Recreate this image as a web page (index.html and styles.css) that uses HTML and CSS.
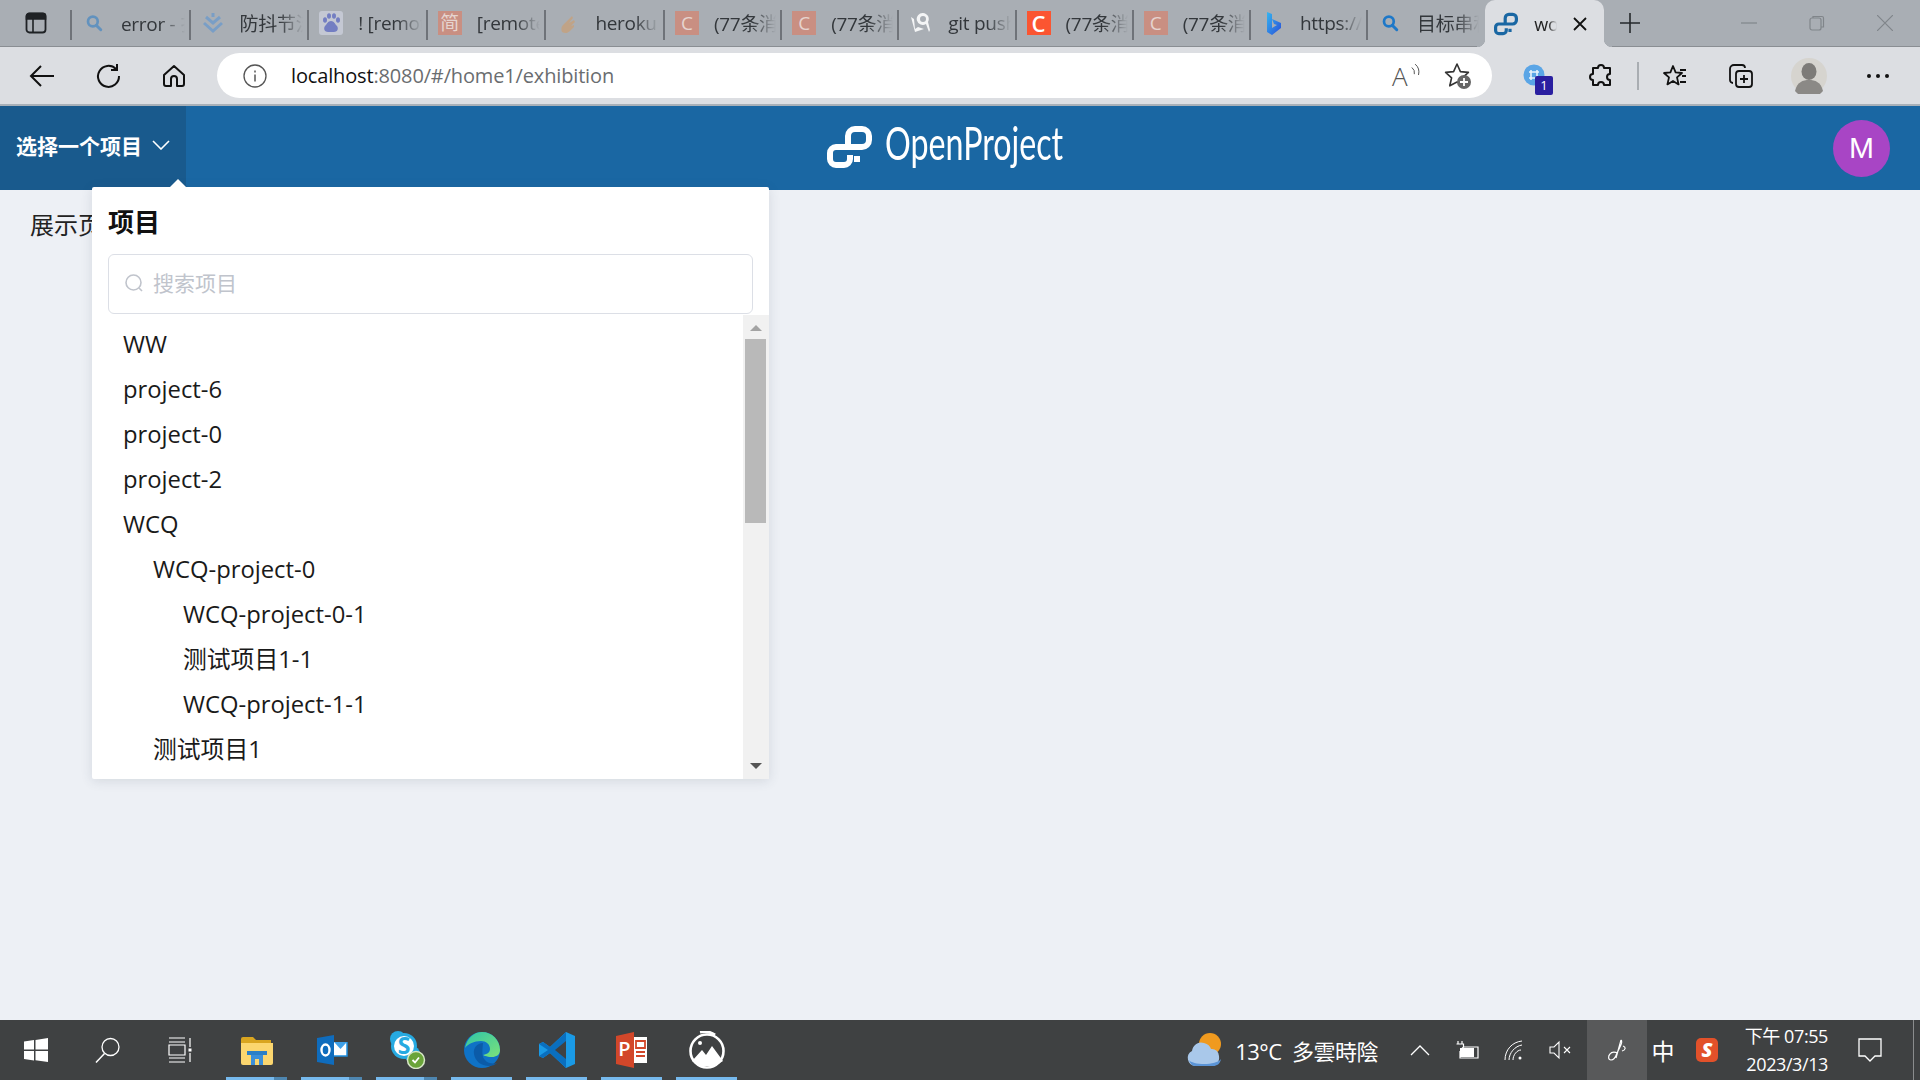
FILE: index.html
```html
<!DOCTYPE html>
<html lang="zh">
<head>
<meta charset="utf-8">
<title>OpenProject</title>
<link rel="stylesheet" href="styles.css">
</head>
<body>
<svg class="defs" width="0" height="0">
  <symbol id="op" viewBox="0 0 45 42">
    <path d="M21 19V10a7 7 0 0 1 7-7h7a7 7 0 0 1 7 7v4a7 7 0 0 1-7 7H9a6 6 0 0 0-6 6v6a6 6 0 0 0 6 6h8a6 6 0 0 0 6-6v-4" fill="none" stroke="currentColor" stroke-width="6"/>
    <rect x="27" y="30" width="6" height="6" fill="currentColor"/>
  </symbol>
  <symbol id="mag" viewBox="0 0 24 24">
    <circle cx="10.5" cy="10" r="6.500" fill="none" stroke="currentColor" stroke-width="3.600"/>
    <path d="M15 15l6 6" stroke="currentColor" stroke-width="4" stroke-linecap="round"/>
  </symbol>
</svg>

<div class="tabbar">
  <div class="tab-side">
    <svg class="i24" viewBox="0 0 24 24"><rect x="2.5" y="2.5" width="19" height="19" rx="3" fill="none" stroke="#1f2225" stroke-width="1.8"/><path d="M2.5 8h19V5a2.5 2.5 0 0 0-2.5-2.5H5A2.5 2.5 0 0 0 2.5 5zM9 8v13.5" fill="#1f2225" stroke="#1f2225" stroke-width="1.6"/></svg>
  </div>
  <div class="tab">
    <svg class="fav-small dim"><use href="#mag"/></svg>
    <span class="tab-title">error - 扌</span>
  </div>
  <div class="tab">
    <svg class="fav dim" viewBox="0 0 24 24"><path d="M12 2v4M5 6l7 6 7-6M3 12l9 8 9-8" fill="none" stroke="#4a90d9" stroke-width="3"/></svg>
    <span class="tab-title">防抖节流</span>
  </div>
  <div class="tab">
    <svg class="fav dim" viewBox="0 0 24 24"><rect width="24" height="24" rx="3" fill="#dfe3f2"/><g fill="#3f4fd0"><ellipse cx="6" cy="9" rx="2" ry="2.8"/><ellipse cx="10" cy="5" rx="2" ry="2.8"/><ellipse cx="15" cy="5" rx="2" ry="2.8"/><ellipse cx="19" cy="9" rx="2" ry="2.8"/><path d="M12 10c-3 0-4 3-6 5-2 3 0 6 3 6h6c3 0 5-3 3-6-2-2-3-5-6-5z"/></g></svg>
    <span class="tab-title">! [remote</span>
  </div>
  <div class="tab">
    <span class="fav-box box-c">简</span>
    <span class="tab-title">[remote</span>
  </div>
  <div class="tab">
    <svg class="fav dim" viewBox="0 0 24 24"><path d="M6 21c-2-5 1-7 3-9l7-7 1 2-4 5 5-3 1 2-4 4 3-1v2l-4 4c-2 2-5 3-8 1z" fill="#d79a5c"/></svg>
    <span class="tab-title">heroku</span>
  </div>
  <div class="tab">
    <span class="fav-box box-c">C</span>
    <span class="tab-title">(77条消息</span>
  </div>
  <div class="tab">
    <span class="fav-box box-c">C</span>
    <span class="tab-title">(77条消息</span>
  </div>
  <div class="tab">
    <svg class="fav" viewBox="0 0 24 24"><path d="M2 6l4 15 9-3-6-2-3 2L5 8zM14 2a6 6 0 1 0 3 11l3 8 1-2-2-8a6 6 0 0 0-5-9zm0 3a3 3 0 1 1 0 6 3 3 0 0 1 0-6z" fill="#f4f5f6"/></svg>
    <span class="tab-title">git push</span>
  </div>
  <div class="tab">
    <span class="fav-box box-c-on">C</span>
    <span class="tab-title">(77条消息</span>
  </div>
  <div class="tab">
    <span class="fav-box box-c">C</span>
    <span class="tab-title">(77条消息</span>
  </div>
  <div class="tab">
    <svg class="fav" viewBox="0 0 24 24"><defs><linearGradient id="bing" x1="0" y1="0" x2="1" y2="1"><stop offset="0" stop-color="#35b6f0"/><stop offset="1" stop-color="#2a4fd8"/></linearGradient></defs><path d="M6 1l5 2v14l5-3-3-1-2-5 9 4v5L11 24l-5-3z" fill="url(#bing)"/></svg>
    <span class="tab-title">https://A</span>
  </div>
  <div class="tab tab-last">
    <svg class="fav-small"><use href="#mag"/></svg>
    <span class="tab-title">目标串和</span>
  </div>
  <div class="tab-active">
    <svg class="fav-op"><use href="#op"/></svg>
    <span class="tab-title active-title">work</span>
    <svg class="i14" viewBox="0 0 14 14"><path d="M1 1l12 12M13 1L1 13" stroke="#111" stroke-width="1.8"/></svg>
  </div>
  <div class="new-tab">
    <svg class="i24" viewBox="0 0 24 24"><path d="M12 2v20M2 12h20" stroke="#25282b" stroke-width="1.6"/></svg>
  </div>
  <div class="win-controls">
    <svg class="i16" viewBox="0 0 16 16"><path d="M0 8h16" stroke="#80858a" stroke-width="1.2"/></svg>
    <svg class="i16" viewBox="0 0 16 16"><rect x="1" y="3" width="11" height="12" rx="2" fill="none" stroke="#80858a" stroke-width="1.2"/><path d="M4 3V1.5h9a1.5 1.5 0 0 1 1.5 1.5v9H12" fill="none" stroke="#80858a" stroke-width="1.2"/></svg>
    <svg class="i16" viewBox="0 0 16 16"><path d="M0 0l16 16M16 0L0 16" stroke="#80858a" stroke-width="1.2"/></svg>
  </div>
</div>

<div class="toolbar">
  <div class="nav-btn">
    <svg class="i26" viewBox="0 0 26 26"><path d="M25 13H2M12 3L2 13l10 10" fill="none" stroke="#111" stroke-width="2"/></svg>
  </div>
  <div class="nav-btn">
    <svg class="i26" viewBox="0 0 26 26"><path d="M21 6A10.5 10.5 0 1 0 24 13M22 1v6h-6" fill="none" stroke="#111" stroke-width="2"/></svg>
  </div>
  <div class="nav-btn">
    <svg class="i26" viewBox="0 0 26 26"><path d="M3 12L13 3l10 9v9a2 2 0 0 1-2 2h-5v-7a3 3 0 0 0-6 0v7H5a2 2 0 0 1-2-2z" fill="none" stroke="#111" stroke-width="2" stroke-linejoin="round"/></svg>
  </div>
  <div class="addr">
    <svg class="i24" viewBox="0 0 24 24"><circle cx="12" cy="12" r="11" fill="none" stroke="#555" stroke-width="1.3"/><path d="M12 10.5v7M12 6.5v2" stroke="#555" stroke-width="1.5"/></svg>
    <span class="url"><span class="url-host">localhost</span>:8080/#/home1/exhibition</span>
    <span class="read-a">A<svg class="waves" viewBox="0 0 12 16"><path d="M1 5q4 3 3 8M5 1q6 5 4 13" fill="none" stroke="#555" stroke-width="1.2"/></svg></span>
    <svg class="i28" viewBox="0 0 28 28"><path d="M13 2l3.4 7.6 8 .8-6 5.4 1.8 8L13 20l-7.2 3.8 1.8-8-6-5.4 8-.8z" fill="none" stroke="#333" stroke-width="1.6" stroke-linejoin="round"/><circle cx="20" cy="20" r="7" fill="#666"/><path d="M20 16v8M16 20h8" stroke="#fff" stroke-width="1.8"/></svg>
  </div>
  <div class="tools">
    <span class="ext">
      <svg class="i26" viewBox="0 0 26 26"><circle cx="12" cy="12" r="10.5" fill="#5aa5e6"/><path d="M9 7v10M15 7v10M7 9h10M7 15h10" stroke="#e8f2fb" stroke-width="1.6"/></svg>
      <span class="ext-badge">1</span>
    </span>
    <svg class="i26" viewBox="0 0 26 26"><path d="M10 5a3 3 0 0 1 6 0h6v6a3 3 0 0 0 0 6v5h-6a3 3 0 0 0-6 0H5v-5a3 3 0 0 1 0-6V5z" fill="none" stroke="#111" stroke-width="2" stroke-linejoin="round"/></svg>
    <span class="tool-sep"></span>
    <svg class="i26 favs" viewBox="0 0 26 26"><path d="M11 3l2.6 6.4 6.4.6-5 4.4 1.6 7L11 18l-5.6 3.4 1.6-7L2 10l6.4-.6zM18 7h6M20 13h4M18 19h6" fill="none" stroke="#111" stroke-width="1.8" stroke-linejoin="round"/></svg>
    <svg class="i26 colls" viewBox="0 0 26 26"><rect x="8" y="8" width="16" height="16" rx="3" fill="none" stroke="#111" stroke-width="1.8"/><path d="M5 20a3 3 0 0 1-3-3V6a4 4 0 0 1 4-4h8a3 3 0 0 1 3 3M16 12v8M12 16h8" fill="none" stroke="#111" stroke-width="1.8"/></svg>
    <svg class="i36 prof" viewBox="0 0 36 36"><circle cx="18" cy="18" r="18" fill="#d6d4cf"/><ellipse cx="18" cy="13.500" rx="7.500" ry="8.500" fill="#7d7b78"/><path d="M4 33c2-9 8-11 14-11s12 2 14 11a18 18 0 0 1-28 0z" fill="#8b8986"/></svg>
    <span class="dots"><i></i><i></i><i></i></span>
  </div>
</div>

<header class="app-head">
  <div class="proj-btn">
    <span>选择一个项目</span>
    <svg class="i16w" viewBox="0 0 18 10"><path d="M1 1l8 8 8-8" fill="none" stroke="#fff" stroke-width="1.6"/></svg>
  </div>
  <div class="logo">
    <svg class="logo-mark"><use href="#op"/></svg>
    <span class="logo-text">OpenProject</span>
  </div>
  <div class="avatar">M</div>
</header>

<main class="content">
  <p class="page-label">展示页</p>
  <div class="popover">
    <span class="pop-arrow"></span>
    <h2 class="pop-title">项目</h2>
    <div class="search">
      <svg class="i20" viewBox="0 0 20 20"><circle cx="9.500" cy="9.500" r="7.500" fill="none" stroke="#c0c4cc" stroke-width="1.600"/><path d="M15 15l3 3" stroke="#c0c4cc" stroke-width="1.600"/></svg>
      <span class="placeholder">搜索项目</span>
    </div>
    <div class="pop-body">
      <ul class="tree">
        <li>WW</li>
        <li>project-6</li>
        <li>project-0</li>
        <li>project-2</li>
        <li>WCQ</li>
        <li class="lv1">WCQ-project-0</li>
        <li class="lv2">WCQ-project-0-1</li>
        <li class="lv2">测试项目1-1</li>
        <li class="lv2">WCQ-project-1-1</li>
        <li class="lv1">测试项目1</li>
      </ul>
      <div class="sbar">
        <span class="sb-up"></span>
        <span class="sb-thumb"></span>
        <span class="sb-down"></span>
      </div>
    </div>
  </div>
</main>

<footer class="taskbar">
  <div class="tb-left">
    <div class="tb-sys">
      <svg class="i26" viewBox="0 0 26 26"><path d="M1 4.500l10-1.400v9.400H1zM12.500 2.900L25 1v11.500H12.500zM1 14h10v9.400L1 22zM12.500 14H25v11l-12.500-1.800z" fill="#fff"/></svg>
    </div>
    <div class="tb-sys">
      <svg class="i26" viewBox="0 0 26 26"><circle cx="15.500" cy="10" r="8.500" fill="none" stroke="#fff" stroke-width="1.300"/><path d="M9.500 16.500L1 25.500" stroke="#fff" stroke-width="1.500"/></svg>
    </div>
    <div class="tb-sys tb-sys-end">
      <svg class="i26" viewBox="0 0 26 26"><path d="M2 1h16M2 25h16M2 5h16M2 21h16M2 8h16v10H2zM23 1v9M23 16v9" fill="none" stroke="#fff" stroke-width="1.200"/><rect x="21.500" y="11.500" width="3" height="3" fill="#fff"/></svg>
    </div>
    <div class="tb-app on multi">
      <svg class="i32" viewBox="0 0 32 32"><path d="M0 5a2 2 0 0 1 2-2h10l3 3h15v4H0z" fill="#d9a520"/><path d="M0 9h32v20a2 2 0 0 1-2 2H2a2 2 0 0 1-2-2z" fill="#fbd66f"/><path d="M10 31V19h12v12h-4v-6h-4v6z" fill="#3c8fd9"/><rect x="6" y="17" width="20" height="4" fill="#2b7fc7"/></svg>
    </div>
    <div class="tb-app on multi">
      <svg class="i32" viewBox="0 0 32 32"><path d="M1 4l17-3v30L1 28z" fill="#0f6cbd"/><rect x="18" y="8" width="13" height="14" fill="#fff"/><path d="M18 8h13l-6.500 7z" fill="#3fa0e8"/><path d="M31 8v14H18" fill="none" stroke="#1f8ee0" stroke-width="1.500"/><ellipse cx="9.500" cy="16" rx="4" ry="5.500" fill="none" stroke="#fff" stroke-width="2.400"/></svg>
    </div>
    <div class="tb-app on multi">
      <svg class="i38" viewBox="0 0 38 38"><circle cx="10" cy="8" r="8" fill="#27aae1"/><circle cx="24" cy="23" r="8" fill="#27aae1"/><circle cx="16" cy="15" r="13" fill="#27aae1"/><circle cx="16" cy="15" r="10" fill="#fff"/><text x="16" y="23" class="sk-s">S</text><circle cx="28" cy="29" r="8.500" fill="#6aa43a" stroke="#d7e7c8" stroke-width="1.500"/><path d="M24.500 29l2.500 2.500 4-5" fill="none" stroke="#fff" stroke-width="1.800"/></svg>
    </div>
    <div class="tb-app on">
      <svg class="i38" viewBox="0 0 38 38"><defs><linearGradient id="edgeA" x1="0" y1="0" x2="1" y2="1"><stop offset="0" stop-color="#2fc4a8"/><stop offset="1" stop-color="#7be27a"/></linearGradient></defs><circle cx="19" cy="19" r="18" fill="#0f72c6"/><path d="M2 17C4 7 11 1 19 1c10 0 18 8 18 18 0 5-4 7-8 7-6 0-9-2-9-2 5-1 7-3 7-6 0-5-4-8-9-8-7 0-13 3-16 7z" fill="url(#edgeA)"/><path d="M20 12c-6 0-10 5-9 11 1 7 7 12 15 12 3 0 6-1 8-3-3 1-9 1-12-3-3-3-3-7-2-17z" fill="#0b5ba8"/></svg>
    </div>
    <div class="tb-app on">
      <svg class="i38" viewBox="0 0 38 38"><path d="M28 1l9 4v28l-9 4L12 22l-7 5-4-2V13l4-2 7 5z" fill="#1a9ae6"/><path d="M28 1v36L12 22 5 27l-4-2 9-6-9-6 4-2 7 5z" fill="#0a6fbf"/><path d="M28 10v18l-11-9z" fill="#3f4142"/></svg>
    </div>
    <div class="tb-app on">
      <svg class="i32 tall" viewBox="0 0 32 36"><path d="M0 4L18 0v36L0 32z" fill="#d2472a"/><rect x="18" y="5" width="13" height="26" fill="#fff"/><path d="M20 9h9v7h-9zM20 20h9M20 24h9" fill="none" stroke="#d2472a" stroke-width="1.800"/><text x="8.500" y="24" class="pp-p">P</text></svg>
    </div>
    <div class="tb-app on">
      <svg class="i38" viewBox="0 0 38 38"><circle cx="19" cy="20" r="16.500" fill="#3f4142" stroke="#fff" stroke-width="2.600"/><path d="M4 30l10-11 4 5 6-9 11 15-8 5H12z" fill="#fff"/><circle cx="12" cy="12" r="2" fill="#fff"/><path d="M12 1a20 20 0 0 1 15 3" fill="none" stroke="#fff" stroke-width="3"/></svg>
    </div>
  </div>
  <div class="tb-right">
    <div class="weather">
      <svg class="i38" viewBox="0 0 38 38"><circle cx="24" cy="13" r="11" fill="#f09a1f"/><path d="M9 35a8 8 0 0 1-3-15c1-6 6-10 12-8 4 1 6 3 7 6a7 7 0 0 1 8 7c1 6-3 10-8 10z" fill="#a9c8ea"/><path d="M3 29c3 5 27 6 32-1-1 5-4 7-8 7H9c-3 0-5-3-6-6z" fill="#5b94d6"/></svg>
      <span>13°C&nbsp;&nbsp;多雲時陰</span>
    </div>
    <div class="tray">
      <svg class="i20" viewBox="0 0 20 20"><path d="M1 15l9-9 9 9" fill="none" stroke="#fff" stroke-width="1.300"/></svg>
      <svg class="i24" viewBox="0 0 24 20"><path d="M3 1v3M7 1v3M1.500 4h7v3l-2 2v2" fill="none" stroke="#fff" stroke-width="1.200"/><path d="M8 7h15v11H5v-7" fill="none" stroke="#fff" stroke-width="1.200"/><rect x="5" y="8" width="14" height="9" fill="#fff"/></svg>
      <svg class="i20" viewBox="0 0 20 20"><path d="M1 20C1 10 8 2 18 1M5 20C5 13 11 6 18 5M9 20c0-5 4-10 8-10" fill="none" stroke="#fff" stroke-width="1"/><circle cx="16" cy="18" r="1.500" fill="#fff"/></svg>
      <svg class="i24" viewBox="0 0 24 24"><path d="M1 9h4l5-5v16l-5-5H1z" fill="none" stroke="#fff" stroke-width="1.100"/><path d="M15 9l6 6M21 9l-6 6" stroke="#fff" stroke-width="1.100"/></svg>
    </div>
    <div class="pen-cell">
      <svg class="i24" viewBox="0 0 24 24"><path d="M16 2c3 2-2 8-4 13-1 3-3 7-6 7-3 0-3-4-1-6 2-3 5-2 8-1M16 2l-5 18M18 8c3 1 3 4-1 5" fill="none" stroke="#fff" stroke-width="1.200"/></svg>
    </div>
    <span class="ime">中</span>
    <span class="sogou">S</span>
    <div class="clock"><span>下午 07:55</span><span>2023/3/13</span></div>
    <div class="notif">
      <svg class="i26" viewBox="0 0 26 26"><path d="M2 2h22v17h-6l-5 5-5-5H2z" fill="none" stroke="#fff" stroke-width="1.300"/></svg>
    </div>
    <span class="show-desk"></span>
  </div>
</footer>
</body>
</html>
```
FILE: styles.css
```css
* { box-sizing: border-box; }
html, body { margin: 0; height: 100%; }
body {
  width: 1920px; height: 1080px; overflow: hidden;
  display: flex; flex-direction: column;
  font-family: "Open Sans", "Noto Sans CJK SC", sans-serif;
  background: #edf0f5; color: #111;
}
.defs { position: absolute; }
svg { display: block; flex: none; }
.i14 { width: 14px; height: 14px; }
.i16 { width: 16px; height: 16px; }
.i20 { width: 20px; height: 20px; }
.i24 { width: 24px; height: 24px; }
.i26 { width: 26px; height: 26px; }
.i28 { width: 28px; height: 28px; }
.i32 { width: 32px; height: 32px; }
.i32.tall { height: 36px; }
.i38 { width: 38px; height: 38px; }
.i36 { width: 36px; height: 36px; }

/* tab strip */
.tabbar {
  height: 47px; flex: none; display: flex; align-items: stretch;
  background: #a9aeb4; border-bottom: 1px solid #8a8e93; position: relative;
}
.tab-side { width: 72px; display: flex; align-items: center; padding-left: 24px; flex: none; }
.tab-side::after { content: ""; position: absolute; left: 70px; top: 10px; width: 2px; height: 30px; background: #6f7379; }
.tab {
  width: 117.2px; flex: none; position: relative;
  display: flex; align-items: center; padding: 0 6px 0 10px; gap: 15px;
}
.tab:nth-child(-n+6) { width: 118.6px; }
.tab::after { content: ""; position: absolute; right: 0; top: 10px; width: 2px; height: 30px; background: #6f7379; }
.tab-last::after { display: none; }
.tab-title {
  font-size: 19px; color: #33373b; white-space: nowrap; overflow: hidden; flex: 1; min-width: 0;
  letter-spacing: -0.3px;
  -webkit-mask-image: linear-gradient(90deg, #000 62%, transparent 100%);
  mask-image: linear-gradient(90deg, #000 62%, transparent 100%);
}
.fav { width: 24px; height: 24px; flex: none; }
.fav-small { width: 18px; height: 18px; margin: 0 3px; flex: none; color: #1e78c8; }
.dim { opacity: .5; }
.fav-box {
  width: 24px; height: 24px; flex: none; display: flex; align-items: center; justify-content: center;
  font-size: 19px; color: #fff; line-height: 1;
}
.box-c { background: #c98f82; color: #e6d4cf; }
.box-c-on { background: #fb5531; font-weight: 600; font-size: 22px; }
.tab-active {
  width: 119px; flex: none; height: 47px; position: relative;
  background: #dcdee2; border-radius: 10px 10px 0 0;
  display: flex; align-items: center; padding: 0 17px 0 9px; gap: 16px;
}
.tab-active::before, .tab-active::after {
  content: ""; position: absolute; bottom: 0; width: 8px; height: 8px;
}
.tab-active::before { left: -8px; background: radial-gradient(circle at 0 0, #a9aeb4 8px, #dcdee2 8.5px); }
.tab-active::after { right: -8px; background: radial-gradient(circle at 100% 0, #a9aeb4 8px, #dcdee2 8.5px); }
.fav-op { width: 24px; height: 24px; color: #1a67a3; flex: none; }
.active-title { flex: 1; color: #222; font-size: 18px; }
.new-tab { width: 52px; display: flex; align-items: center; justify-content: center; flex: none; }
.win-controls { flex: 1; display: flex; align-items: center; justify-content: flex-end; gap: 52px; padding-right: 27px; }

/* toolbar */
.toolbar {
  height: 59px; flex: none; display: flex; align-items: center;
  background: #dcdee2; border-bottom: 2px solid #a8b0b8; padding: 0 0 0 9px;
}
.nav-btn { width: 66px; display: flex; justify-content: center; flex: none; }
.addr {
  width: 1275px; height: 45px; margin-left: 10px; flex: none;
  background: #fff; border-radius: 23px; display: flex; align-items: center;
  padding: 0 20px 0 26px; gap: 24px;
}
.url { flex: 1; font-size: 20px; color: #6a6d70; letter-spacing: -0.15px; white-space: nowrap; }
.url-host { color: #111; }
.read-a { position: relative; width: 26px; font-size: 26px; line-height: 34px; font-weight: 300; color: #555; margin-right: 2px; }
.waves { position: absolute; right: -3px; top: 4px; width: 10px; height: 14px; }
.tools { flex: 1; display: flex; align-items: center; padding-left: 30px; }
.ext { position: relative; display: block; width: 26px; height: 26px; margin-right: 40px; }
.ext-badge {
  position: absolute; left: 13px; top: 13px; width: 18px; height: 19px;
  background: #2a1fa0; color: #fff; font-size: 13px; text-align: center; line-height: 19px; border-radius: 2px;
}
.tool-sep { width: 2px; height: 28px; background: #a9adb2; margin: 0 23px; }
.favs { margin-right: 40px; }
.colls { margin-right: 37px; }
.prof { margin-right: 40px; }
.dots { display: flex; gap: 5px; }
.dots i { width: 4px; height: 4px; border-radius: 50%; background: #111; }

/* app header */
.app-head {
  height: 84px; flex: none; background: #1a67a3; position: relative;
  display: flex; align-items: center; justify-content: space-between;
}
.proj-btn {
  width: 186px; height: 84px; background: #195a8d; color: #fff; font-weight: 700; font-size: 21px;
  display: flex; align-items: center; gap: 10px; padding: 0 0 6px 16px; white-space: nowrap;
}
.i16w { width: 18px; height: 10px; }
.logo { position: absolute; left: 827px; top: 20px; display: flex; align-items: flex-start; gap: 13px; }
.logo-mark { width: 45px; height: 42px; color: #fff; }
.logo-text {
  display: block; font-family: Lato, sans-serif; font-weight: 400; font-size: 46px; line-height: 42px; color: #fff;
  margin-top: -4px; transform: scaleX(.7); transform-origin: left center; white-space: nowrap;
}
.avatar {
  width: 57px; height: 57px; border-radius: 50%; background: #a845c5; color: #fff; margin-right: 30px;
  font-family: "Liberation Sans", sans-serif; font-size: 30px; display: flex; align-items: center; justify-content: center;
}

/* content */
.content { flex: 1; position: relative; }
.page-label { margin: 17px 0 0 30px; font-size: 24px; line-height: 36px; color: #222; }
.popover {
  position: absolute; left: 92px; top: -3px; width: 677px; height: 592px;
  background: #fff; box-shadow: 0 2px 12px rgba(60,70,90,.14); border-radius: 2px;
  display: flex; flex-direction: column;
}
.pop-arrow {
  position: absolute; left: 78px; top: -8px; width: 0; height: 0;
  border-left: 8px solid transparent; border-right: 8px solid transparent; border-bottom: 8px solid #fff;
}
.pop-title { margin: 17px 0 0 16px; font-size: 26px; line-height: 36px; font-weight: 700; color: #111; }
.search {
  margin: 14px 16px 0; height: 60px; flex: none; border: 1px solid #dcdfe6; border-radius: 6px;
  display: flex; align-items: center; gap: 9px; padding: 0 0 2px 15px;
}
.placeholder { font-size: 21px; color: #c0c4cc; line-height: 30px; }
.pop-body { flex: 1; display: flex; min-height: 0; }
.tree { flex: 1; margin: 0; padding: 8px 0 0 31px; list-style: none; overflow: hidden; }
.tree li { height: 45px; line-height: 45px; font-size: 23.8px; color: #1a1a1a; white-space: nowrap; }
.tree .lv1 { padding-left: 30px; }
.tree .lv2 { padding-left: 60px; }
.sbar {
  width: 26px; flex: none; background: #f1f1f1; display: flex; flex-direction: column; align-items: center;
  padding: 10px 0; margin-top: 1px;
}
.sb-up { width: 0; height: 0; border-left: 6px solid transparent; border-right: 6px solid transparent; border-bottom: 6px solid #a3a3a3; }
.sb-thumb { width: 21px; height: 184px; background: #b9b9b9; margin: 8px 1px 0 0; }
.sb-down { width: 0; height: 0; border-left: 6px solid transparent; border-right: 6px solid transparent; border-top: 6px solid #555; margin-top: auto; }

/* taskbar */
.taskbar {
  height: 60px; flex: none; background: #3f4142; display: flex; justify-content: space-between; color: #fff;
}
.tb-left { display: flex; align-items: stretch; }
.tb-sys { width: 72px; display: flex; align-items: center; justify-content: center; }
.tb-sys-end { margin-right: 3px; }
.tb-app { width: 75px; position: relative; display: flex; align-items: center; justify-content: center; padding-bottom: 1px; }
.on::after { content: ""; position: absolute; left: 7px; right: 7px; bottom: 0; height: 3px; background: #76b9ed; }
.multi::before { content: ""; position: absolute; right: 7px; bottom: 0; width: 13px; height: 3px; background: #4e86b0; z-index: 1; }
.sk-s { font-family: "Open Sans", sans-serif; font-size: 23px; font-weight: 700; fill: #27aae1; text-anchor: middle; }
.pp-p { font-family: "Open Sans", sans-serif; font-size: 20px; font-weight: 600; fill: #fff; text-anchor: middle; }
.tb-right { display: flex; align-items: center; height: 100%; }
.weather { display: flex; align-items: center; gap: 11px; font-size: 22px; letter-spacing: -0.5px; white-space: nowrap; margin-right: 32px; }
.tray { display: flex; align-items: center; gap: 25px; margin-right: 14px; }
.pen-cell { width: 60px; height: 60px; background: #58595a; display: flex; align-items: center; justify-content: center; }
.ime { font-size: 23px; width: 32px; text-align: center; }
.sogou {
  width: 22px; height: 24px; background: #e2512a; border-radius: 5px; margin-left: 17px; color: #fff;
  font-weight: 800; font-style: italic; font-size: 20px; line-height: 24px; text-align: center; font-family: "Open Sans", sans-serif;
}
.clock {
  display: flex; flex-direction: column; align-items: flex-end; width: 110px;
  font-size: 18px; line-height: 28px; letter-spacing: -0.4px; white-space: nowrap;
}
.notif { width: 80px; margin-left: 2px; display: flex; justify-content: center; }
.show-desk { width: 1px; height: 60px; background: #8a8c8d; margin: 0 6px 0 3px; }
```
